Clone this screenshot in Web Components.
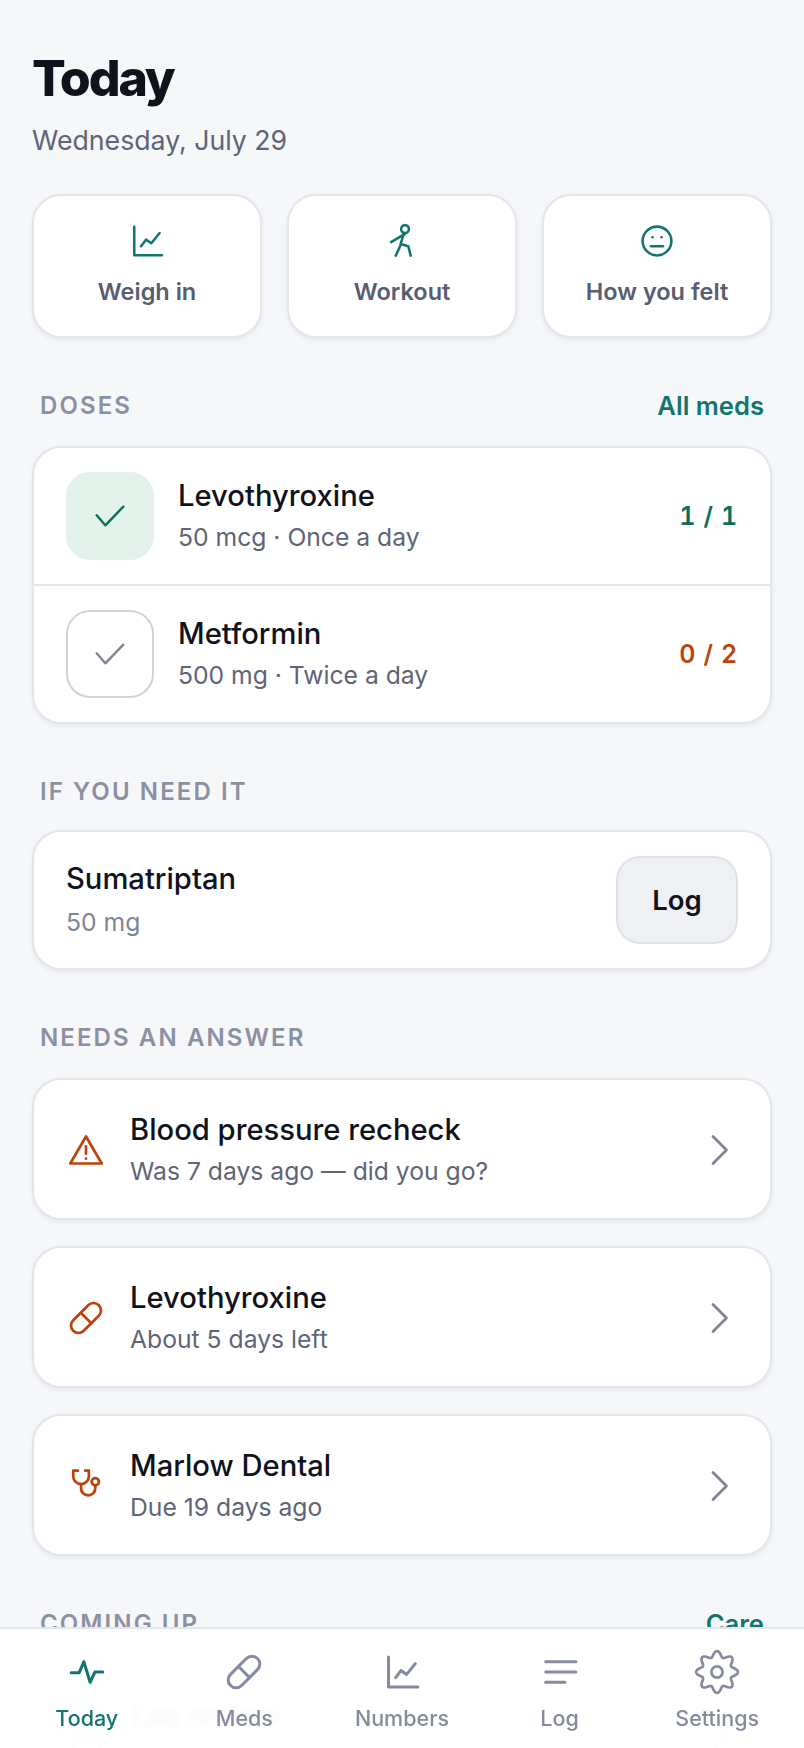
<!DOCTYPE html>
<html lang="en">
<head>
<meta charset="utf-8">
<title>Today</title>
<style>
  html, body { margin: 0; height: 100%; overflow: hidden; background: #f6f7f9; }
  body { font-family: Inter, "Liberation Sans", sans-serif; color: #10121c; }
</style>
</head>
<body>
<today-screen></today-screen>
<tab-bar></tab-bar>

<script>
// wavy 8 lobe outline for the settings cog
function cogPath() {
  let d = '';
  for (let i = 0; i < 160; i++) {
    const a = i / 160 * Math.PI * 2;
    const r = 9.4 + 1.5 * Math.cos(a * 8);
    d += (i ? 'L' : 'M') + (12 + r * Math.sin(a)).toFixed(2) + ' ' + (12 - r * Math.cos(a)).toFixed(2);
  }
  return d + 'z';
}

const ICONS = {
  chart: '<path d="M3.5 2.5v19H22"/><path d="M8 15.5l3.3-4.4 3.6 2.4 5.5-6.8"/>',
  walk: '<circle cx="14" cy="4" r="2.6"/><path d="M4.7 12.7L14 7.3"/><path d="M13.3 6.7L11.1 14l5.1 1.5 1.6 6.3"/><path d="M11.1 14.7L7.8 21.8"/>',
  meh: '<circle cx="12" cy="12" r="9.6"/><path d="M8 15.5h8"/><path d="M9 9.5h.01"/><path d="M15 9.5h.01"/>',
  check: '<path d="M2 11.5l6.5 7.5L22 5"/>',
  alert: '<path d="M12 3L1.5 21h21z"/><path d="M12 9.5v5"/><path d="M12 17.8h.01"/>',
  pill: '<path d="M10.5 20.5l10-10a4.95 4.95 0 1 0-7-7l-10 10a4.95 4.95 0 1 0 7 7z"/><path d="M8.5 8.5l7 7"/>',
  stetho: '<path d="M6.5 1.8h-3V5.5a5.2 5.2 0 0 0 10.4 0V1.8h-2.4"/><path d="M8.7 10.7v2.8a4.75 4.75 0 0 0 9.5 0v-1.8"/><circle cx="18.2" cy="9.1" r="2.4"/>',
  lab: '<rect x="4" y="5" width="17" height="17" rx="4"/><path d="M9.5 11.5h.01"/><path d="M15.5 11.5h.01"/><path d="M9 16.5h7"/>',
  chevron: '<path d="M8 3l9 9-9 9"/>',
  pulse: '<path d="M2 12.5h5l3-7 4 13 3-6.5h5"/>',
  log: '<path d="M3 5.5h19"/><path d="M3 12h19"/><path d="M3 18.5h12"/>',
  gear: '<path d="' + cogPath() + '"/><circle cx="12" cy="12" r="2.9"/>'
};

class AppIcon extends HTMLElement {
  connectedCallback() {
    const size = this.getAttribute('size') || 24;
    const stroke = this.getAttribute('stroke') || 2;
    this.attachShadow({ mode: 'open' }).innerHTML = `
      <style>:host { display: inline-flex; color: inherit; } svg { display: block; }</style>
      <svg width="${size}" height="${size}" viewBox="0 0 24 24" fill="none" stroke="currentColor"
        stroke-width="${stroke}" stroke-linecap="round" stroke-linejoin="round">${ICONS[this.getAttribute('name')]}</svg>`;
  }
}
customElements.define('app-icon', AppIcon);

class QuickAction extends HTMLElement {
  connectedCallback() {
    this.attachShadow({ mode: 'open' }).innerHTML = `
      <style>
        :host { display: flex; flex-direction: column; align-items: center; gap: 17px; flex: 1 1 0;
          padding: 27px 0 28px; background: #fff; border: 2px solid #e4e6ee; border-radius: 29px;
          box-shadow: 0 2px 5px rgba(20,25,50,.07); font-size: 23.5px; font-weight: 600; color: #585d72; line-height: 32px; }
        app-icon { color: #12766e; }
      </style>
      <app-icon name="${this.getAttribute('icon')}" size="36" stroke="1.7"></app-icon>
      <slot></slot>`;
  }
}
customElements.define('quick-action', QuickAction);

class SectionHead extends HTMLElement {
  connectedCallback() {
    const link = this.getAttribute('link');
    this.attachShadow({ mode: 'open' }).innerHTML = `
      <style>
        :host { display: flex; justify-content: space-between; align-items: center; padding: 0 8px; line-height: 30px;
          margin: 53px 0 25px; }
        .label { font-size: 24px; font-weight: 600; letter-spacing: 2.1px; color: #8b90a3; }
        .link { font-size: 25.6px; font-weight: 600; color: #12766e; }
      </style>
      <span class="label"><slot></slot></span>
      ${link ? `<span class="link">${link}</span>` : ''}`;
  }
}
customElements.define('section-head', SectionHead);

class CardBox extends HTMLElement {
  constructor() {
    super();
    this.attachShadow({ mode: 'open' }).innerHTML = `
      <style>
        :host { display: block; background: #fff; border: 2px solid #e4e6ee; border-radius: 29px;
          box-shadow: 0 2px 5px rgba(20,25,50,.07); overflow: hidden; }
      </style>
      <slot></slot>`;
  }
}
customElements.define('card-box', CardBox);

class DoseRow extends HTMLElement {
  connectedCallback() {
    const done = this.hasAttribute('done');
    this.attachShadow({ mode: 'open' }).innerHTML = `
      <style>
        :host { display: flex; align-items: center; padding: 24px 32px; gap: 24px; }
        :host(:not(:last-child)) { border-bottom: 2px solid #e4e6ee; }
        .tile { width: 88px; height: 88px; box-sizing: border-box; border-radius: 24px; display: flex;
          align-items: center; justify-content: center; flex: none;
          background: ${done ? '#e3f3ec' : '#fff'}; border: ${done ? '0' : '2px solid #d0d3df'};
          color: ${done ? '#0b6e55' : '#7f8496'}; }
        .text { flex: 1; }
        .name { font-size: 29.2px; font-weight: 500; line-height: 38px; color: #10121c; }
        .sub { font-size: 24.7px; line-height: 36px; color: #5f6478; margin-top: 4px; }
        .count { font-size: 25px; font-weight: 600; letter-spacing: .7px; font-variant-numeric: tabular-nums;
          color: ${done ? '#0b6e55' : '#bd430b'}; }
      </style>
      <div class="tile"><app-icon name="check" size="32" stroke="1.8"></app-icon></div>
      <div class="text"><div class="name">${this.getAttribute('name')}</div><div class="sub">${this.getAttribute('sub')}</div></div>
      <div class="count">${this.getAttribute('count')}</div>`;
  }
}
customElements.define('dose-row', DoseRow);

class PrnRow extends HTMLElement {
  connectedCallback() {
    this.attachShadow({ mode: 'open' }).innerHTML = `
      <style>
        :host { display: flex; align-items: center; justify-content: space-between; padding: 24px 32px; }
        .name { font-size: 29.2px; font-weight: 500; line-height: 38px; }
        .sub { font-size: 24.7px; line-height: 36px; color: #7f8496; margin-top: 6px; }
        .log { width: 122px; height: 88px; box-sizing: border-box; border-radius: 24px; background: #eff0f4;
          border: 2px solid #dfe1e9; display: flex; align-items: center; justify-content: center;
          font-size: 27.5px; font-weight: 600; }
      </style>
      <div><div class="name">${this.getAttribute('name')}</div><div class="sub">${this.getAttribute('sub')}</div></div>
      <div class="log">Log</div>`;
  }
}
customElements.define('prn-row', PrnRow);

class AnswerCard extends HTMLElement {
  connectedCallback() {
    this.attachShadow({ mode: 'open' }).innerHTML = `
      <style>
        :host { display: flex; align-items: center; gap: 26px; padding: 31px 33px 29px 34px; background: #fff;
          border: 2px solid #e4e6ee; border-radius: 29px; box-shadow: 0 2px 5px rgba(20,25,50,.07); }
        .ic { color: #bd430b; display: flex; }
        .chev { color: #7f8496; display: flex; }
        .text { flex: 1; }
        .name { font-size: 29.2px; font-weight: 500; line-height: 38px; }
        .sub { font-size: 24.7px; line-height: 36px; color: #5f6478; margin-top: 4px; }
      </style>
      <span class="ic"><app-icon name="${this.getAttribute('icon')}" size="36" stroke="1.8"></app-icon></span>
      <div class="text"><div class="name">${this.getAttribute('name')}</div><div class="sub">${this.getAttribute('sub')}</div></div>
      <span class="chev"><app-icon name="chevron" size="36" stroke="1.8"></app-icon></span>`;
  }
}
customElements.define('answer-card', AnswerCard);

class TodayScreen extends HTMLElement {
  connectedCallback() {
    this.attachShadow({ mode: 'open' }).innerHTML = `
      <style>
        :host { display: block; padding: 46px 32px 0; }
        h1 { margin: 0; font-size: 50px; line-height: 64px; font-weight: 800; letter-spacing: -2.1px; color: #10121c; }
        .date { font-size: 26.7px; line-height: 36px; color: #5f6478; margin-top: 12px; }
        .quick { display: flex; gap: 25px; margin-top: 36px; }
        .stack { display: flex; flex-direction: column; gap: 26px; }
      </style>
      <h1>Today</h1>
      <div class="date">Wednesday, July 29</div>
      <div class="quick">
        <quick-action icon="chart">Weigh in</quick-action>
        <quick-action icon="walk">Workout</quick-action>
        <quick-action icon="meh">How you felt</quick-action>
      </div>
      <section-head link="All meds">DOSES</section-head>
      <card-box>
        <dose-row done name="Levothyroxine" sub="50 mcg · Once a day" count="1 / 1"></dose-row>
        <dose-row name="Metformin" sub="500 mg · Twice a day" count="0 / 2"></dose-row>
      </card-box>
      <section-head style="margin-bottom:23px">IF YOU NEED IT</section-head>
      <card-box><prn-row name="Sumatriptan" sub="50 mg"></prn-row></card-box>
      <section-head>NEEDS AN ANSWER</section-head>
      <div class="stack">
        <answer-card icon="alert" name="Blood pressure recheck" sub="Was 7 days ago — did you go?"></answer-card>
        <answer-card icon="pill" name="Levothyroxine" sub="About 5 days left"></answer-card>
        <answer-card icon="stetho" name="Marlow Dental" sub="Due 19 days ago"></answer-card>
      </div>
      <section-head link="Care">COMING UP</section-head>
      <div class="stack">
        <answer-card icon="lab" name="Lab review" sub="Jul 31 at 3:30 PM"></answer-card>
      </div>`;
  }
}
customElements.define('today-screen', TodayScreen);

class TabBar extends HTMLElement {
  connectedCallback() {
    const tabs = [['pulse', 'Today'], ['pill', 'Meds'], ['chart', 'Numbers'], ['log', 'Log'], ['gear', 'Settings']];
    this.attachShadow({ mode: 'open' }).innerHTML = `
      <style>
        :host { position: fixed; left: 0; right: 0; bottom: 0; height: 121px; display: flex; justify-content: space-around;
          padding: 0 8px; box-sizing: border-box; border-top: 2px solid #e4e6ee; background: rgba(255,255,255,.965);
          backdrop-filter: blur(3px); }
        .tab { flex: 1; display: flex; flex-direction: column; align-items: center; padding-top: 24px; gap: 13px;
          font-size: 21.5px; font-weight: 500; line-height: 28px; color: #858a9e; }
        .tab.on { color: #12766e; }
        .box { height: 38px; display: flex; align-items: center; justify-content: center; }
      </style>
      ${tabs.map(([icon, label], i) => `<div class="tab ${i === 0 ? 'on' : ''}"><div class="box"><app-icon name="${icon}" size="${icon === 'gear' ? 46 : 38}" stroke="${icon === 'gear' ? 1.4 : 1.9}"></app-icon></div>${label}</div>`).join('')}`;
  }
}
customElements.define('tab-bar', TabBar);
</script>
</body>
</html>
